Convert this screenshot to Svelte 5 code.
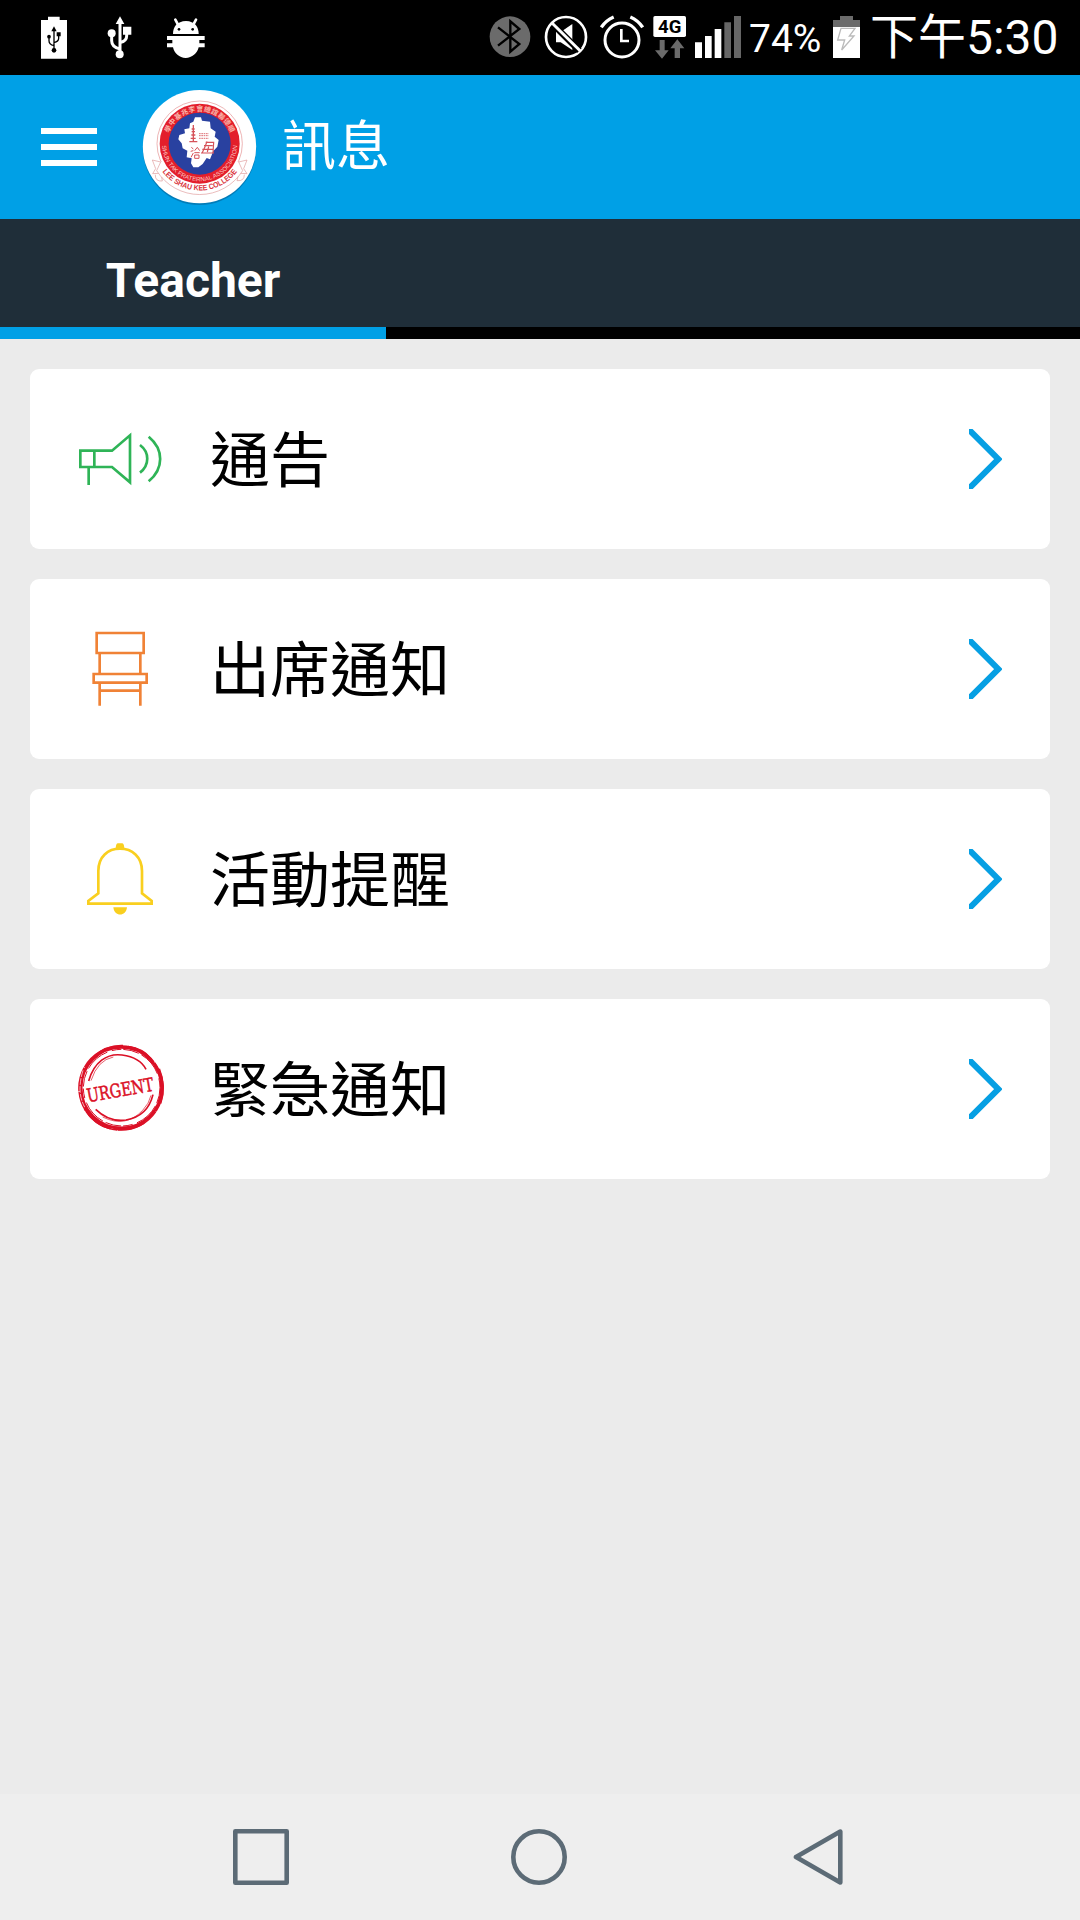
<script lang="ts">
  type IconName = 'megaphone' | 'chair' | 'bell' | 'urgent';

  interface MenuItem {
    icon: IconName;
    label: string;
  }

  const items: MenuItem[] = [
    { icon: 'megaphone', label: '通告' },
    { icon: 'chair', label: '出席通知' },
    { icon: 'bell', label: '活動提醒' },
    { icon: 'urgent', label: '緊急通知' },
  ];
</script>

<div class="screen" lang="zh-TW">
  <div class="status-bar">
    <div class="status-group">
      <svg class="usb-battery" width="26" height="75" viewBox="0 0 78 225">
        <path d="M0 60h21v-10h35v10h22v116H0z" fill="#fff" />
        <g stroke="#000" stroke-width="4" fill="none">
          <path d="M39 150V90M39 137q-15-4-15-15v-11M39 128q14-3 14-13v-12" />
        </g>
        <path d="M39 79l8 15H31zM47 97h12v12H47z" fill="#000" />
        <circle cx="24" cy="110" r="5.5" />
        <circle cx="39" cy="151" r="7" />
      </svg>
      <svg class="usb" width="26" height="75" viewBox="0 0 78 225" fill="#fff">
        <path d="M39 165V65M39 147q-25-6-25-25v-20M39 128q20-5 20-20v-8" fill="none" stroke="#fff" stroke-width="9" />
        <path d="M39 49l13 23H26zM48 80h25v24H48z" />
        <circle cx="14" cy="100" r="12" />
        <circle cx="38" cy="163" r="12" />
      </svg>
      <svg class="debug" width="38" height="75" viewBox="0 0 114 225" fill="#fff">
        <path d="M18 102C18 80 30 64 57 63C83 64 95 80 95 102z" />
        <path d="M33 74L25 59M79 74L87 59" stroke="#fff" stroke-width="8" stroke-linecap="round" />
        <circle cx="36" cy="88" r="4" fill="#000" />
        <circle cx="77" cy="88" r="4" fill="#000" />
        <path d="M0 108h113v12H97v10h16v12H95c-4 18-20 32-39 32S22 160 18 142H0v-12h16v-10H0z" />
      </svg>
    </div>
    <div class="status-group">
      <svg width="42" height="75" viewBox="0 0 126 225">
        <circle cx="63" cy="110" r="61" fill="#6b6b6b" />
        <path d="M27 82l64 50-27 23V64l27 23-64 50" fill="none" stroke="#000" stroke-width="7" />
      </svg>
      <svg class="mute" width="44" height="75" viewBox="0 0 132 225">
        <circle cx="66" cy="111" r="60" fill="none" stroke="#fff" stroke-width="8" />
        <path d="M36 96h14l35-24v78L50 127H36z" fill="#fff" />
        <path d="M29 75l77 77" stroke="#000" stroke-width="19" />
        <path d="M24 69l85 84" stroke="#fff" stroke-width="9" />
      </svg>
      <svg class="alarm" width="44" height="75" viewBox="0 0 132 225" fill="none" stroke="#fff">
        <circle cx="66" cy="120" r="51" stroke-width="9" />
        <path d="M64 87v36h23" stroke-width="8" />
        <path d="M4 82q14-21 37-31M128 82q-14-21-37-31" stroke-width="10" />
      </svg>
      <svg class="network" width="34" height="75" viewBox="0 0 102 225">
        <rect x="1" y="48" width="98" height="63" rx="5" fill="#fff" />
        <text x="50" y="100" text-anchor="middle" class="network-label" textLength="70" lengthAdjust="spacingAndGlyphs">4G</text>
        <path d="M20 120h15v31h12l-20 25-21-25h14zM65 174h16v-29h13l-21-27-21 27h13z" fill="#6b6b6b" />
      </svg>
      <svg class="signal" width="47" height="75" viewBox="0 0 141 225">
        <path d="M0 127h21v47H0zM30 108h20v66H30zM59 87h20v87H59z" fill="#fff" />
        <path d="M88 67h20v107H88zM117 48h21v126h-21z" fill="#666" />
      </svg>
      <span class="percent">74%</span>
      <svg class="battery" width="27" height="75" viewBox="0 0 81 225">
        <path d="M0 60h21V48h39v12h21v22H0z" fill="#6b6b6b" />
        <path d="M0 81h81v93H0z" fill="#fff" />
        <path d="M24 85h42L49 108h14L26 150l9-30H14z" fill="none" stroke="#bbb" stroke-width="4" />
      </svg>
      <span class="clock">下午5:30</span>
    </div>
  </div>

  <header class="app-bar">
    <button class="menu" aria-label="Menu">
      <i></i>
      <i></i>
      <i></i>
    </button>
    <svg class="logo" width="120" height="120" viewBox="30 21 360 360">
      <defs>
        <path id="arc-top" d="M116.500 160.900A97.300 97.300 0 0 1 301.500 160.900" />
        <path id="arc-ring" d="M96 191A113 113 0 0 0 322 191" />
        <path id="arc-ribbon" d="M95.800 273.800A140 140 0 0 0 322.200 273.800" />
      </defs>
      <circle cx="208.500" cy="205" r="170" fill="#045f91" opacity="0.55" />
      <circle cx="208.500" cy="200" r="170" fill="#fff" />
      <circle cx="209" cy="191" r="128" fill="none" stroke="#e49090" stroke-width="2" />
      <g fill="#fff" stroke="#e09a9a" stroke-width="2">
        <path d="M92 246L67 240l10 26-9 15 20-1M326 246l25-6-10 26 10 15-21-1" />
        <path d="M92 246L80 272A152 152 0 0 0 338 272L326 246" />
        <path d="M76 284q-1 21 21 19l-2-12M343 284q0 20-22 18l3-12" fill="none" />
      </g>
      <circle cx="209" cy="191" r="120" fill="#e31e2b" />
      <circle cx="209" cy="191" r="93" fill="#2941a0" />
      <path
        d="M195 112l18 0 3 10 24 3 2 20 15 10-3 15 12 10-4 20-12 13-10 25-10-4-12 18-13 10h-15l-7-12 2-15-15-3 2-20-14-7-3-15-10-12 3-13 17-5-2-12 15-3 2-15 10-5z"
        fill="#fff"
      />
      <g fill="none" stroke="#d6535a" stroke-width="4">
        <path d="M190 135v48M185 147h9M185 155h10M184 165h12M182 175h15M178 185h24" />
        <path d="M207 161h29M207 167h29M207 175h29" stroke-width="2.500" stroke-dasharray="5 2" />
        <path d="M227 187h24l-2 32M222 197h26M217 208h33M213 219h39M231 184l-5 14-10 22M236 200l-4 16" stroke-width="3.500" />
        <path d="M184 202l6 5M182 214l8-2M183 232l7-13M194 212l8-10 7 10M193 218h16M194 225h13v10h-13z" stroke-width="3" />
      </g>
      <text class="logo-top"><textPath href="#arc-top" startOffset="2" textLength="240" lengthAdjust="spacing">學中基兆李會總誼聯德順</textPath></text>
      <text class="logo-ring"><textPath href="#arc-ring" startOffset="6" textLength="343" lengthAdjust="spacingAndGlyphs">SHUN TAK FRATERNAL ASSOCIATION</textPath></text>
      <text class="logo-ribbon"><textPath href="#arc-ribbon" startOffset="2" textLength="260" lengthAdjust="spacingAndGlyphs">LEE SHAU KEE COLLEGE</textPath></text>
    </svg>
    <h1>訊息</h1>
  </header>

  <nav class="tabs">
    <button class="tab active">Teacher</button>
  </nav>

  <main>
    {#each items as item (item.icon)}
      <button class="card">
        {#if item.icon === 'megaphone'}
          <svg class="icon" viewBox="165 162 270 270" fill="none" stroke="#2fb457" stroke-width="8">
            <path d="M181 272h95l54-46v141l-54-46h-95zM223 272v49M206 321v54" />
            <path d="M360 255c29 22 29 60 0 83M386 230c46 38 46 95 0 134" />
          </svg>
        {:else if item.icon === 'chair'}
          <svg class="icon" viewBox="45 72 270 270" fill="none" stroke="#f08236" stroke-width="8">
            <path d="M110 99h141v60H110zM101 222h159v26H101zM119 159v63M241 159v63M119 248v69M241 248v69M119 272h122" />
          </svg>
        {:else if item.icon === 'bell'}
          <svg class="icon" viewBox="45 72 270 270" fill="none" stroke="#f9cf1f" stroke-width="8">
            <path d="M85 281v-8l30-23v-67c0-43 29-67 65-67s66 24 66 67v67l29 23v8z" />
            <path d="M167 119q0-18 6-19h14q6 1 6 19zM160 292h41c-3 29-38 29-41 0z" fill="#f9cf1f" stroke="none" />
          </svg>
        {:else}
          <svg class="icon" viewBox="45 72 270 270" fill="none" stroke="#db1026">
            <circle cx="184" cy="203" r="121" stroke-width="9" />
            <circle cx="183" cy="204" r="126" stroke-width="5" stroke-dasharray="74 2 131 2 112 3 59 2" />
            <circle cx="185" cy="203" r="115" stroke-width="3" stroke-dasharray="48 9 76 14 29 6" />
            <path d="M104 111Q140 77 189 79M204 82q43 5 68 36M296 147q21 52 4 103M75 265q30 48 77 59M163 325q46 7 89-18" stroke-width="9" />
            <path d="M69 151q-20 65 5 110" stroke-width="2" stroke="#fff" stroke-dasharray="20 4" />
            <path d="M86 183C102 126 141 99 186 105S248 128 258 148M107 268q40 39 91 32 65-11 81-76" stroke-width="5" />
            <path d="M93 182q20-62 67-71M128 291q69 34 120-20 20-21 25-45" stroke-width="2" />
            <text class="urgent" x="84" y="247" transform="rotate(-10 84 247)" textLength="203" lengthAdjust="spacingAndGlyphs">URGENT</text>
          </svg>
        {/if}
        <span class="label">{item.label}</span>
        <svg class="chevron" width="33" height="60" viewBox="117 207 99 180">
          <path d="M110 202l95 95.500-95 95" fill="none" stroke="#069fe3" stroke-width="18" />
        </svg>
      </button>
    {/each}
  </main>

  <footer class="nav-bar">
    <svg width="56" height="56" viewBox="0 0 56 56">
      <rect x="2.300" y="2.300" width="51.400" height="51.400" stroke-linejoin="round" />
    </svg>
    <svg class="home" width="56" height="56" viewBox="0 0 56 56">
      <circle cx="28" cy="28" r="25.700" />
    </svg>
    <svg class="back" width="50" height="56" viewBox="0 0 50 56">
      <path d="M47.300 2.600v50.800L3 28z" stroke-linejoin="round" />
    </svg>
  </footer>
</div>

<style>
  :global(body) {
    margin: 0;
  }

  .screen {
    display: flex;
    flex-direction: column;
    width: 1080px;
    height: 1920px;
    background: #ebebeb;
    font-family: Roboto, 'Noto Sans CJK TC', sans-serif;
    overflow: hidden;
  }

  svg {
    display: block;
    flex: none;
  }

  button {
    padding: 0;
    border: 0;
    font-family: inherit;
  }

  .status-bar {
    display: flex;
    justify-content: space-between;
    height: 75px;
    flex: none;
    box-sizing: border-box;
    padding: 0 23px 0 41px;
    background: #000;
    color: #fff;
  }

  .status-group {
    display: flex;
    height: 75px;
  }

  .usb {
    margin-left: 40px;
  }

  .debug {
    margin-left: 34px;
  }

  .mute {
    margin-left: 13px;
  }

  .alarm {
    margin-left: 12px;
  }

  .network {
    margin-left: 9px;
  }

  .network-label {
    font-size: 55px;
    font-weight: 700;
  }

  .signal {
    margin-left: 8px;
  }

  .percent {
    width: 74px;
    margin-left: 7px;
    font-size: 39px;
    line-height: 79px;
    white-space: nowrap;
  }

  .battery {
    margin-left: 10px;
  }

  .clock {
    width: 187px;
    margin-left: 10px;
    font-size: 48px;
    line-height: 76px;
    white-space: nowrap;
  }

  .app-bar {
    display: flex;
    align-items: center;
    height: 144px;
    flex: none;
    background: #00a0e6;
    color: #fff;
  }

  .menu {
    display: flex;
    flex-direction: column;
    gap: 10px;
    width: 56px;
    margin-left: 41px;
    background: none;
  }

  .menu i {
    height: 6px;
    background: #fff;
  }

  .logo {
    margin-left: 43px;
  }

  .logo-top {
    font-size: 21px;
    font-weight: 700;
    fill: #f9b5aa;
  }

  .logo-ring {
    font-family: 'Liberation Sans', sans-serif;
    font-size: 18px;
    fill: #fbc9c4;
  }

  .logo-ribbon {
    font-family: 'Liberation Sans', sans-serif;
    font-size: 23px;
    font-weight: 700;
    fill: #d9323b;
  }

  h1 {
    margin: 2px 0 0 22px;
    font-size: 54px;
    font-weight: 400;
    line-height: 72px;
  }

  .tabs {
    display: flex;
    height: 120px;
    flex: none;
    background: linear-gradient(#1f2e39 108px, #000 108px);
  }

  .tab {
    width: 386px;
    box-sizing: border-box;
    padding-top: 14px;
    border-bottom: 12px solid transparent;
    background: none;
    color: #fff;
    font-size: 48px;
    font-weight: 700;
  }

  .tab.active {
    border-bottom-color: #00a0e6;
  }

  main {
    display: flex;
    flex: 1;
    flex-direction: column;
    gap: 30px;
    padding: 30px;
  }

  .card {
    display: flex;
    align-items: center;
    height: 180px;
    padding: 0 48px 0 45px;
    border-radius: 9px;
    background: #fff;
    color: #000;
    text-align: left;
  }

  .icon {
    width: 90px;
    height: 90px;
    overflow: visible;
  }

  .urgent {
    font-family: 'DejaVu Serif', serif;
    font-size: 56px;
    fill: #db1026;
    stroke: #db1026;
    stroke-width: 1.500;
  }

  .label {
    flex: 1;
    margin-left: 45px;
    padding-top: 6px;
    font-size: 60px;
    line-height: 90px;
  }

  .nav-bar {
    display: flex;
    align-items: center;
    height: 126px;
    flex: none;
    box-sizing: border-box;
    padding-left: 233px;
    background: #eee;
    fill: none;
    stroke: #5c6b76;
    stroke-width: 4.600;
  }

  .home {
    margin-left: 222px;
  }

  .back {
    margin-left: 226px;
  }
</style>
